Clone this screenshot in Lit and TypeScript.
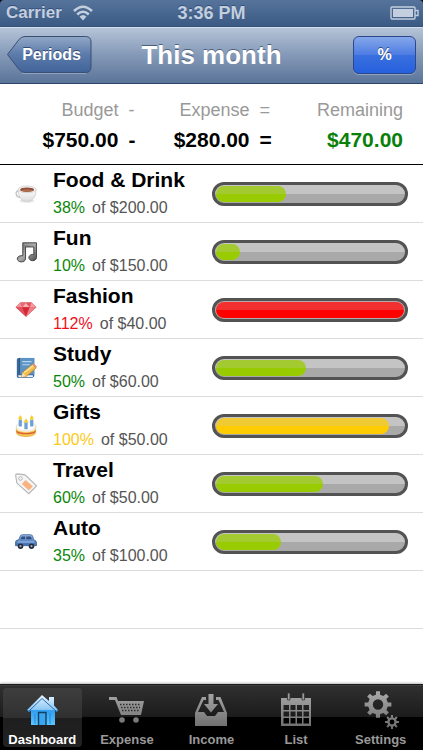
import { LitElement, html, css, svg } from "lit";
import { customElement, property } from "lit/decorators.js";

type Level = "ok" | "full" | "over";

interface Category {
  name: string;
  icon: string;
  percent: number;
  budget: string;
}

const CATEGORIES: Category[] = [
  { name: "Food & Drink", icon: "cup", percent: 38, budget: "$200.00" },
  { name: "Fun", icon: "music", percent: 10, budget: "$150.00" },
  { name: "Fashion", icon: "gem", percent: 112, budget: "$40.00" },
  { name: "Study", icon: "book", percent: 50, budget: "$60.00" },
  { name: "Gifts", icon: "cake", percent: 100, budget: "$50.00" },
  { name: "Travel", icon: "tag", percent: 60, budget: "$50.00" },
  { name: "Auto", icon: "car", percent: 35, budget: "$100.00" },
];

const TABS = [
  { label: "Dashboard", icon: "home" },
  { label: "Expense", icon: "cart" },
  { label: "Income", icon: "inbox" },
  { label: "List", icon: "calendar" },
  { label: "Settings", icon: "gears" },
];

const levelOf = (percent: number): Level =>
  percent > 100 ? "over" : percent === 100 ? "full" : "ok";

const CATEGORY_ICONS: Record<string, unknown> = {
  cup: svg`
    <defs><linearGradient id="cup" x1="0" x2="0" y1="0" y2="1"><stop offset="0" stop-color="#fff"/><stop offset="1" stop-color="#dcdcdc"/></linearGradient></defs>
    <ellipse cx="13" cy="19.500" rx="8" ry="2" fill="#e6e6e6"/>
    <path d="M5 8.500C-.5 7.500 0 16 6.500 15.500" fill="none" stroke="#c2c2c2" stroke-width="1.500"/>
    <path d="M3.500 7C3.500 14 6 20 13 20S23 14 23 7Z" fill="url(#cup)" stroke="#c8c8c8" stroke-width=".8"/>
    <ellipse cx="13.200" cy="7" rx="9.700" ry="3.700" fill="#f6f6f6" stroke="#c8c8c8" stroke-width=".8"/>
    <ellipse cx="13.200" cy="7.300" rx="7.600" ry="2.500" fill="#8f4f38"/>
    <path d="M7 8C10 6.800 16.500 6.800 19.500 8C17.500 10.200 9 10.200 7 8Z" fill="#b3704f"/>`,
  music: svg`
    <defs><linearGradient id="note" x1="0" x2="1" y1="0" y2="1"><stop offset="0" stop-color="#555"/><stop offset=".5" stop-color="#aaa"/><stop offset="1" stop-color="#444"/></linearGradient></defs>
    <path d="M8.500 2H23.500V18A4.200 3.400 0 1 1 20.500 14.800V6.500H11.500V19.500A4.500 3.400 0 1 1 8.500 16.200Z" fill="url(#note)" stroke="#3c3c3c" stroke-width="1"/>
    <path d="M9.500 3.500H22.500" stroke="#aaa"/>`,
  gem: svg`
    <path d="M1 9L6 4H18L23 9L12 19Z" fill="#dd4450" stroke="#cf5a64" stroke-width=".8"/>
    <path d="M1 9L6 4L8 9Z" fill="#f2929a"/><path d="M6 4H12L8 9Z" fill="#ea6a74"/>
    <path d="M12 4L8 9H16Z" fill="#f7b0b5"/><path d="M12 4H18L16 9Z" fill="#e4555f"/><path d="M18 4L23 9H16Z" fill="#f49ca3"/>
    <path d="M1 9H8L12 19Z" fill="#e2525d"/><path d="M8 9H16L12 19Z" fill="#d12835"/><path d="M16 9H23L12 19Z" fill="#ee7f88"/>`,
  book: svg`
    <path d="M4 1H21V21L19 23H4Q2 23 2 21V3Q2 1 4 1Z" fill="#386899"/>
    <path d="M5 1H21V19H5Z" fill="#5d93c4"/><path d="M5 1V19" stroke="#2c5580"/>
    <path d="M3.500 20H19.500V22H4Z" fill="#f0f4f8"/>
    <path d="M8 5H18M8 8.500H16" stroke="#b9d6ef" stroke-width="1.200"/>
    <path d="M7 22L8.500 16.500L19 8L23 12L12.500 21Z" fill="#f2bd4d" stroke="#b98224" stroke-width=".8"/>
    <path d="M10 17L20 9.500" stroke="#fbe19b" stroke-width="1.600"/>
    <path d="M7 22L8.500 17L12 21Z" fill="#f5dfb5"/><path d="M19 8L20.500 7L24 10.500L23 12Z" fill="#e58a70"/>`,
  cake: svg`
    <path d="M1.500 12V19C1.500 25 22.500 25 22.500 19V12Z" fill="#f6c64c" stroke="#dda53a" stroke-width=".7"/>
    <path d="M1.500 16.500C4 20.500 20 20.500 22.500 16.500V18.500C20 22 4 22 1.500 18.500Z" fill="#d95c3c"/>
    <ellipse cx="12" cy="12.500" rx="10.500" ry="5" fill="#fff" stroke="#d9d4cc" stroke-width=".7"/>
    <path d="M1.500 13C4 18.500 20 18.500 22.500 13V15C20 19.500 4 19.500 1.500 15Z" fill="#f8f2ea"/>
    <path d="M4 5H7.500V12.500H4ZM10.200 8H13.800V15.500H10.200ZM16.500 5H20V12.500H16.500Z" fill="#6f9fd8"/>
    <path d="M5.700 0L8 3.500L5.700 6L3.500 3.500ZM12 3.500L14.200 7L12 9L9.800 7ZM18.300 0L20.500 3.500L18.300 6L16 3.500Z" fill="#f8cf2c"/>`,
  tag: svg`
    <path d="M.7 2.500Q.7 1 2.500 1L11 2L23.500 14L15 22.500L2 11Z" fill="#f5f5f5" stroke="#b4b4b4" stroke-width="1.200"/>
    <circle cx="6" cy="6" r="1.900" fill="#fff" stroke="#aaa"/>
    <path d="M11.500 7.500L19.500 14.500L15 19L7.500 12Z" fill="#f9b383"/>`,
  car: svg`
    <defs><linearGradient id="car" x1="0" x2="0" y1="0" y2="1"><stop offset="0" stop-color="#8db4e6"/><stop offset="1" stop-color="#3a69ac"/></linearGradient></defs>
    <path d="M.5 12Q.5 10 4 9.500L6 5Q6.500 4 8 4H17Q18.500 4 19.200 5.500L20.500 9.500Q23.500 10.500 23.500 12.500V16H.5Z" fill="url(#car)" stroke="#3d608f" stroke-width=".8"/>
    <path d="M6 9L7.500 6H11V9ZM12.300 6H17L18.500 9H12.300Z" fill="#33507c"/>
    <path d="M3 12H21" stroke="#a9c8f0"/>
    <circle cx="6" cy="16.500" r="3" fill="#222c3c"/><circle cx="18" cy="16.500" r="3" fill="#222c3c"/>
    <circle cx="6" cy="16.500" r="1.200" fill="#a5adb8"/><circle cx="18" cy="16.500" r="1.200" fill="#a5adb8"/>`,
};

/** Outline of a cog: alternating inner and outer points around a centre. */
function cogPath(cx: number, cy: number, inner: number, outer: number, teeth: number, hole: number): string {
  const points: string[] = [];
  const step = (Math.PI * 2) / teeth;
  for (let i = 0; i < teeth; i++) {
    const a = i * step - Math.PI / 2;
    const spots: [number, number][] = [
      [-0.27, inner],
      [-0.19, outer],
      [0.19, outer],
      [0.27, inner],
    ];
    for (const [shift, radius] of spots) {
      const t = a + shift * step;
      points.push(`${(cx + radius * Math.cos(t)).toFixed(2)} ${(cy + radius * Math.sin(t)).toFixed(2)}`);
    }
  }
  return `M${points.join("L")}Z M${cx - hole} ${cy}a${hole} ${hole} 0 1 0 ${hole * 2} 0a${hole} ${hole} 0 1 0 ${-hole * 2} 0Z`;
}

const TAB_ICONS: Record<string, unknown> = {
  home: svg`
    <defs>
      <linearGradient id="sky" x1="0" x2="0" y1="0" y2="1"><stop offset="0" stop-color="#e4f2fd"/><stop offset=".48" stop-color="#8fcaf8"/><stop offset=".52" stop-color="#2f9ff2"/><stop offset="1" stop-color="#5cc6fb"/></linearGradient>
    </defs>
    <path d="M18 2L3 17L5 19L7 17.500V32H31V17.500L33 19L34 17L30 12.500V4H25V8Z" fill="url(#sky)"/>
    <path d="M5 18L18 5.500L32 18" fill="none" stroke="#2a6db0" stroke-width="1"/>
    <path d="M14.500 32V19.500H22V32" fill="#3aa6f2" stroke="#16405f" stroke-width="1.400"/>
    <path d="M11 21V31M26 20V31" stroke="#2586d8" stroke-width="1"/>`,
  cart: svg`
    <path d="M0 4H7.500L9 8H35L32 22H12L6 7H0Z" fill="url(#metal)"/>
    <path d="M11 11.500H32M12 14.500H31M13 17.500H30" stroke="#2a2a2a" stroke-width="1.300" stroke-dasharray="1.500 1.500"/>
    <circle cx="13" cy="27" r="2.800" fill="url(#metal)"/><circle cx="27" cy="27" r="2.800" fill="url(#metal)"/>`,
  inbox: svg`
    <path d="M9 4H13V7H10.500L5 19H11L14 23H22L25 19H31L25.500 7H23V4H27.500L34 20V33H2V20Z" fill="url(#metal)"/>
    <path d="M15.500 1H20.500V11H25L18 19.500L11 11H15.500Z" fill="url(#metal)"/>`,
  calendar: svg`
    <path fill-rule="evenodd" d="M3 5H33V33H3ZM5.500 12V17H11V12ZM12.500 12V17H17.500V12ZM19 12V17H24V12ZM25.500 12V17H31V12ZM5.500 18.500V23.500H11V18.500ZM12.500 18.500V23.500H17.500V18.500ZM19 18.500V23.500H24V18.500ZM25.500 18.500V23.500H31V18.500ZM5.500 25V30.500H11V25ZM12.500 25V30.500H17.500V25ZM19 25V30.500H24V25ZM25.500 25V30.500H31V25Z" fill="url(#metal)"/>
    <path d="M9.500 0H12V7H9.500ZM24 0H26.500V7H24Z" fill="#999" stroke="#333" stroke-width=".8"/>`,
  gears: svg`
    <path fill-rule="evenodd" d="${cogPath(15, 11.5, 10, 13.5, 8, 5.2)}" fill="url(#metal)"/>
    <path fill-rule="evenodd" d="${cogPath(29, 29, 4.8, 7, 8, 2.4)}" fill="url(#metal)"/>`,
};

@customElement("status-bar")
class StatusBar extends LitElement {
  static styles = css`
    :host {
      display: grid;
      grid-template-columns: 1fr auto 1fr;
      align-items: center;
      height: 26px;
      padding: 0 4px;
      background: linear-gradient(#56749b, #3b5a84);
      color: #c3cfdf;
      font-size: 18px;
      font-weight: bold;
      text-shadow: 0 -1px 0 #34507a;
    }
    .carrier {
      display: flex;
      align-items: center;
      gap: 11px;
      padding-left: 2px;
      font-size: 17px;
    }
    .battery {
      justify-self: end;
    }
    svg {
      display: block;
    }
  `;

  render() {
    return html`
      <div class="carrier">
        <span>Carrier</span>
        <svg width="20" height="16" viewBox="0 0 20 16" role="img" aria-label="Wi-Fi">
          <g fill="none" stroke="#c3cfdf" stroke-width="2.600">
            <path d="M1 6Q10 -2.500 19 6" />
            <path d="M4.200 9.500Q10 4 15.800 9.500" />
          </g>
          <path d="M6.500 11.500Q10 8.500 13.500 11.500L10 15.500Z" fill="#c3cfdf" />
        </svg>
      </div>
      <span>3:36 PM</span>
      <svg class="battery" width="29" height="14" viewBox="0 0 29 14" role="img" aria-label="Battery full">
        <rect x="1" y="1" width="24" height="12" rx="1" fill="none" stroke="#c3cfdf" stroke-width="1.400" />
        <rect x="3" y="3" width="20" height="8" fill="#c3cfdf" />
        <path d="M25 4.500H28V9.500H25" fill="none" stroke="#c3cfdf" stroke-width="1.400" />
      </svg>
    `;
  }
}

@customElement("nav-bar")
class NavBar extends LitElement {
  static styles = css`
    :host {
      display: grid;
      grid-template-columns: 1fr auto 1fr;
      align-items: center;
      box-sizing: border-box;
      height: 58px;
      padding: 0 7px;
      border-top: 1px solid #34517a;
      border-bottom: 1px solid #2f4567;
      background: linear-gradient(#b6c5d9, #8499b7 50%, #5a7499);
      box-shadow: inset 0 1px 0 #d3deea;
    }
    h1 {
      margin: 0;
      color: #fff;
      font-size: 26px;
      line-height: 32px;
      text-shadow: 0 -1px 0 #4c5f7c;
    }
    button {
      margin: 0;
      padding: 0;
      border: 0;
      background: none;
      color: #fff;
      font: bold 16px/38px "Liberation Sans", Arial, sans-serif;
      text-shadow: 0 -1px 0 #334a72;
    }
    .back {
      display: grid;
      justify-self: start;
      width: 85px;
      height: 38px;
    }
    .back > * {
      grid-area: 1 / 1;
    }
    .back span {
      padding-left: 4px;
    }
    .action {
      justify-self: end;
      box-sizing: border-box;
      width: 63px;
      height: 38px;
      border: 1px solid #2d478c;
      border-radius: 6px;
      background: linear-gradient(#86a8ea, #4c7be2 50%, #3a6fdf 51%, #2560dd);
      box-shadow: 0 1px 0 #8fa3c0;
      line-height: 36px;
    }
  `;

  render() {
    return html`
      <button class="back" type="button">
        <svg width="85" height="38" viewBox="0 0 85 38" aria-hidden="true">
          <defs>
            <linearGradient id="back" x1="0" x2="0" y1="0" y2="1">
              <stop offset="0" stop-color="#91a7c7" />
              <stop offset=".5" stop-color="#5c7baa" />
              <stop offset="1" stop-color="#41639a" />
            </linearGradient>
          </defs>
          <path
            d="M.5 18.500L12 3.500Q14.500 .5 18 .5H78.500Q84 .5 84 6V31Q84 36.500 78.500 36.500H18Q14.500 36.500 12 33.500Z"
            fill="url(#back)"
            stroke="#3b4f73"
          />
          <path d="M15 37.500H79" stroke="#8fa3c0" />
        </svg>
        <span>Periods</span>
      </button>
      <h1>This month</h1>
      <button class="action" type="button">%</button>
    `;
  }
}

@customElement("budget-summary")
class BudgetSummary extends LitElement {
  static styles = css`
    :host {
      display: block;
      padding: 14px 0 6px;
      border-bottom: 1px solid #000;
      background: #fff;
    }
    table {
      width: 100%;
      table-layout: fixed;
      border-collapse: collapse;
      text-align: right;
      white-space: nowrap;
    }
    .amount {
      width: 28%;
    }
    .second {
      width: 24%;
    }
    th,
    td {
      box-sizing: border-box;
      padding: 0;
    }
    th {
      height: 24px;
      color: #999;
      font-size: 18px;
      font-weight: normal;
    }
    td {
      height: 36px;
      font-size: 21px;
      font-weight: bold;
    }
    .sign {
      width: 7%;
      padding-left: 10px;
      text-align: left;
    }
    .rest {
      padding-right: 20px;
    }
    td.rest {
      color: #0a800a;
    }
  `;

  render() {
    return html`
      <table>
        <thead>
          <tr>
            <th class="amount" scope="col">Budget</th>
            <th class="sign">-</th>
            <th class="second" scope="col">Expense</th>
            <th class="sign">=</th>
            <th class="rest" scope="col">Remaining</th>
          </tr>
        </thead>
        <tbody>
          <tr>
            <td>$750.00</td>
            <td class="sign">-</td>
            <td>$280.00</td>
            <td class="sign">=</td>
            <td class="rest">$470.00</td>
          </tr>
        </tbody>
      </table>
    `;
  }
}

@customElement("category-row")
class CategoryRow extends LitElement {
  @property({ attribute: false }) category!: Category;

  static styles = css`
    :host {
      display: grid;
      grid-template-columns: 22px 1fr 50%;
      align-items: center;
      column-gap: 16px;
      height: 57px;
      padding: 0 15px;
    }
    .icon {
      display: block;
    }
    .text {
      min-width: 0;
      padding-top: 1px;
    }
    h2 {
      margin: 0;
      font-size: 21px;
      line-height: 28px;
      white-space: nowrap;
    }
    p {
      display: flex;
      gap: 7px;
      margin: 0;
      color: #555;
      font-size: 16px;
      line-height: 28px;
      white-space: nowrap;
    }
    .percent.ok {
      color: #0a870a;
    }
    .percent.full {
      color: #fcc918;
    }
    .percent.over {
      color: #f0101c;
    }
    .track {
      box-sizing: border-box;
      width: 100%;
      height: 24px;
      padding: 1px;
      border: 3px solid #535353;
      border-radius: 12px;
      background: linear-gradient(#c4c4c4 50%, #a9a9a9 50%);
    }
    .fill {
      height: 16px;
      border-radius: 8px;
    }
    .fill.ok {
      background: linear-gradient(#a4ca32 50%, #99cc00 50%);
    }
    .fill.full {
      background: linear-gradient(#f0ca32 50%, #ffcc00 50%);
    }
    .fill.over {
      background: linear-gradient(#f23030 50%, #ff0000 50%);
    }
    .track.over {
      background: #b9a9a9;
    }
  `;

  render() {
    const { name, icon, percent, budget } = this.category;
    const level = levelOf(percent);
    // The rounded cap always shows, so the scale starts a little above zero.
    const width = Math.min(100, 4 + percent * 0.88);
    return html`
      <svg class="icon" width="22" height="22" viewBox="0 0 24 24" aria-hidden="true">${CATEGORY_ICONS[icon]}</svg>
      <div class="text">
        <h2>${name}</h2>
        <p><span class="percent ${level}">${percent}%</span><span>of ${budget}</span></p>
      </div>
      <div
        class="track ${level}"
        role="progressbar"
        aria-label=${name}
        aria-valuenow=${percent}
        aria-valuemin="0"
        aria-valuemax="100"
      >
        <div class="fill ${level}" style="width: ${width}%"></div>
      </div>
    `;
  }
}

@customElement("tab-bar")
class TabBar extends LitElement {
  static styles = css`
    :host {
      display: block;
      border-top: 1px solid #1a1a1a;
      background: linear-gradient(#303030, #1b1b1b 50%, #000 50%);
      box-shadow: inset 0 1px 0 #3d3d3d, 0 -1px 2px #bbb;
    }
    nav {
      display: grid;
      grid-template-columns: repeat(5, 1fr);
      height: 65px;
    }
    button {
      display: flex;
      flex-direction: column;
      align-items: center;
      gap: 4px;
      margin: 3px;
      padding: 5px 0 0;
      border: 0;
      border-radius: 4px;
      background: none;
      color: #999;
      font: bold 13px/14px "Liberation Sans", Arial, sans-serif;
    }
    .current {
      background: linear-gradient(#3e3e3e, #303030 50%, #1e1e1e 50%, #222);
      color: #fff;
    }
    svg {
      display: block;
      flex: none;
      overflow: visible;
    }
  `;

  render() {
    return html`
      <nav>
        ${TABS.map(
          (tab, index) => html`
            <button type="button" class=${index === 0 ? "current" : ""} aria-current=${index === 0 ? "page" : "false"}>
              <svg width="36" height="36" viewBox="0 0 36 36" aria-hidden="true">
                <defs>
                  <linearGradient id="metal" gradientUnits="userSpaceOnUse" x1="0" x2="0" y1="0" y2="36">
                    <stop offset="0" stop-color="#a6a6a6" />
                    <stop offset="1" stop-color="#6c6c6c" />
                  </linearGradient>
                </defs>
                ${TAB_ICONS[tab.icon]}
              </svg>
              <span>${tab.label}</span>
            </button>
          `,
        )}
      </nav>
    `;
  }
}

@customElement("app-root")
class AppRoot extends LitElement {
  static styles = css`
    :host {
      display: flex;
      flex-direction: column;
      min-height: 100vh;
      background: #fff;
      color: #000;
      font-family: "Liberation Sans", Arial, sans-serif;
    }
    header {
      overflow: hidden;
      border-radius: 4px 4px 0 0;
    }
    .top {
      background: #000;
    }
    main {
      flex: 1;
    }
    ul {
      margin: 0;
      padding: 0;
      list-style: none;
    }
    li {
      min-height: 57px;
      border-bottom: 1px solid #dcdcdc;
    }
  `;

  render() {
    return html`
      <div class="top">
        <header>
          <status-bar></status-bar>
          <nav-bar></nav-bar>
        </header>
      </div>
      <main>
        <budget-summary></budget-summary>
        <ul>
          ${CATEGORIES.map((category) => html`<li><category-row .category=${category}></category-row></li>`)}
          <li></li>
        </ul>
      </main>
      <tab-bar></tab-bar>
    `;
  }
}
